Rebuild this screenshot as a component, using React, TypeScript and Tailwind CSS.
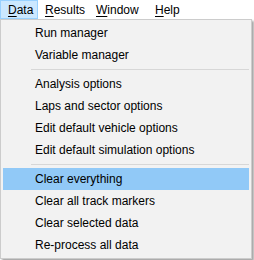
import React from "react";

type Entry = { label: string; active?: boolean } | "sep";

const menuBar = [
  { first: "D", rest: "ata", width: "w-[38px]", open: true },
  { first: "R", rest: "esults", width: "w-[51px]" },
  { first: "W", rest: "indow", width: "w-[59px]" },
  { first: "H", rest: "elp", width: "w-[40px]" },
];

const entries: Entry[] = [
  { label: "Run manager" },
  { label: "Variable manager" },
  "sep",
  { label: "Analysis options" },
  { label: "Laps and sector options" },
  { label: "Edit default vehicle options" },
  { label: "Edit default simulation options" },
  "sep",
  { label: "Clear everything", active: true },
  { label: "Clear all track markers" },
  { label: "Clear selected data" },
  { label: "Re-process all data" },
];

export default function App() {
  return (
    <div className="w-[254px] h-[260px] bg-white text-[12px] text-black font-['Liberation_Sans',Arial,sans-serif] overflow-hidden">
      {/* menu bar */}
      <div className="flex h-[19px]">
        {menuBar.map((m) => (
          <div
            key={m.first}
            className={
              "h-[19px] pl-[7px] flex items-center leading-none " +
              m.width +
              (m.open ? " bg-[#cce8ff] border border-[#99d1ff] pl-[6px]" : "")
            }
          >
            <span>
              <span className="underline underline-offset-2">{m.first}</span>
              {m.rest}
            </span>
          </div>
        ))}
      </div>

      {/* dropdown */}
      <div className="w-[252px] bg-[#f2f2f2] border border-[#cccccc] p-[2px] shadow-[2px_2px_2px_rgba(0,0,0,0.35)]">
        {entries.map((e, i) =>
          e === "sep" ? (
            <div key={i} className="h-[7px] pt-[3px] pl-[28px]">
              <div className="h-px bg-[#d7d7d7]" />
            </div>
          ) : (
            <div
              key={i}
              className={
                "h-[22px] pl-[32px] flex items-center whitespace-nowrap" +
                (e.active ? " bg-[#91c9f7]" : "")
              }
            >
              {e.label}
            </div>
          )
        )}
      </div>
    </div>
  );
}
